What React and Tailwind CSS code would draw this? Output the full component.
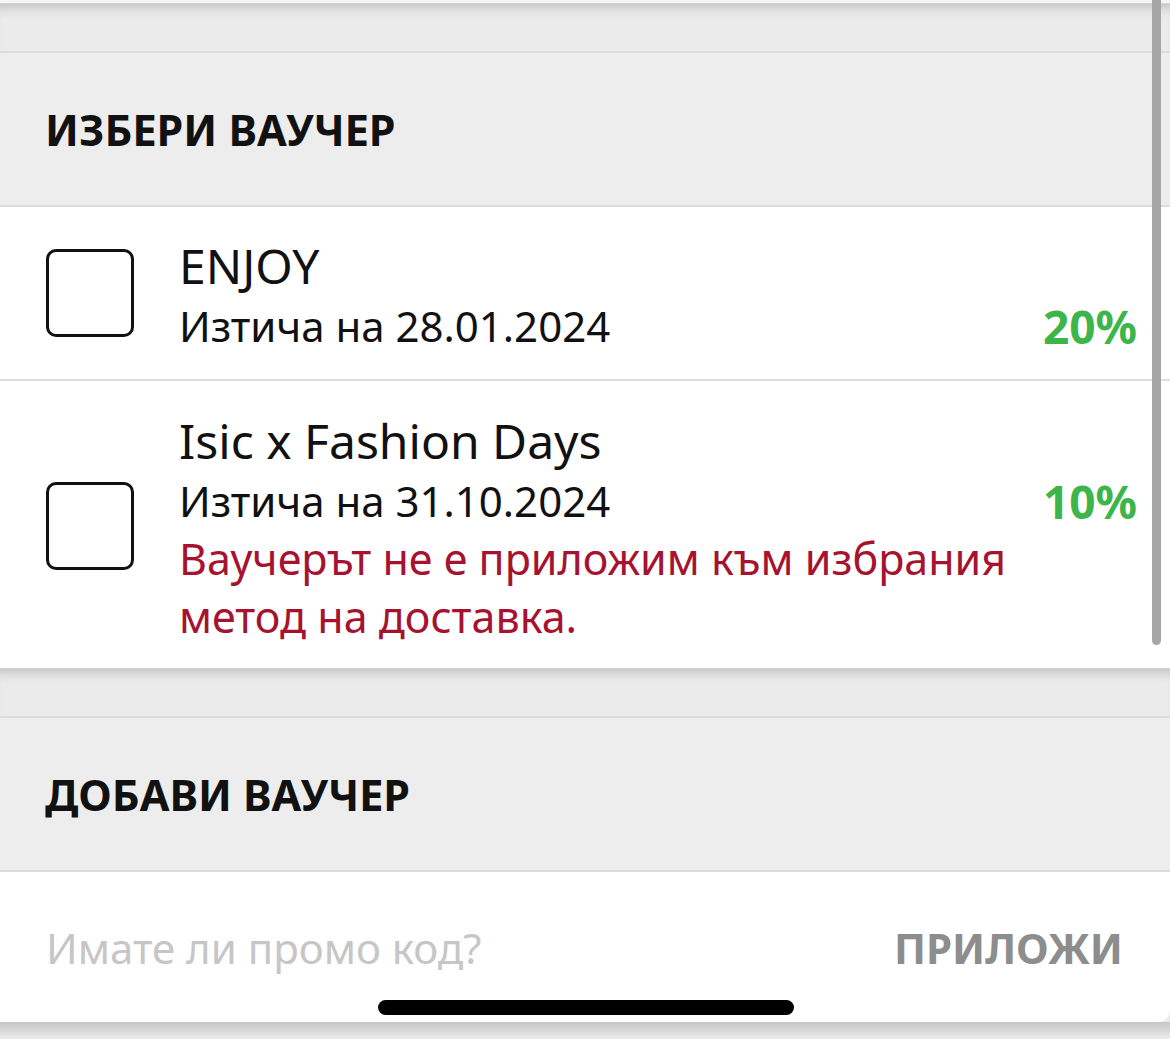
import React from "react";

const vouchers = [
  {
    id: "enjoy",
    title: "ENJOY",
    expires: "Изтича на 28.01.2024",
    discount: "20%",
  },
  {
    id: "isic",
    title: "Isic x Fashion Days",
    expires: "Изтича на 31.10.2024",
    discount: "10%",
    error: "Ваучерът не е приложим към избрания метод на доставка.",
  },
];

function Checkbox() {
  return (
    <div className="w-[88px] h-[88px] shrink-0 mb-[4px] rounded-[10px] border-[3px] border-[#111] bg-white" />
  );
}

function SectionHeader({ children }) {
  return (
    <div className="h-[154px] border-t-2 border-[#dcdcdc] bg-[#ededed] flex items-center px-[45px]">
      <h2 className="text-[43px] font-bold text-[#111] leading-none">{children}</h2>
    </div>
  );
}

function Gap() {
  return (
    <div className="h-[47px] bg-[#ebebeb] shadow-[inset_0_12px_12px_-9px_rgba(0,0,0,0.2)]" />
  );
}

function VoucherRow({ voucher, last }) {
  return (
    <div
      className={`flex items-center pl-[46px] pr-[33px] ${
        last
          ? "pt-[28px] pb-[22px] border-b border-[#d4d4d4]"
          : "pt-[27px] pb-[24px] border-b-2 border-[#dedede]"
      }`}
    >
      <Checkbox />
      <div className="flex-1 ml-[45px] grid grid-cols-[1fr_auto] items-start gap-x-[24px] text-[42px] leading-[58px] text-[#111]">
        <div className="col-span-2 text-[48px] leading-[63px]">{voucher.title}</div>
        <div>{voucher.expires}</div>
        <div className="font-bold text-[46px] leading-[58px] text-[#3db54a] text-right">
          {voucher.discount}
        </div>
        {voucher.error && <div className="text-[43px] text-[#a7122f]">{voucher.error}</div>}
      </div>
    </div>
  );
}

export default function App() {
  return (
    <div
      className="w-[1170px] h-[1039px] relative overflow-hidden bg-[#ebebeb]"
      style={{ fontFamily: '"Noto Sans", "Open Sans", sans-serif' }}
    >
      <div className="h-[3px] bg-[#f5f5f5]" />
      <div className="h-[1px] bg-[#d4d4d4]" />
      <Gap />
      <SectionHeader>ИЗБЕРИ ВАУЧЕР</SectionHeader>

      <div className="bg-white border-t-2 border-[#dcdcdc]">
        {vouchers.map((v, i) => (
          <VoucherRow key={v.id} voucher={v} last={i === vouchers.length - 1} />
        ))}
      </div>

      <Gap />
      <SectionHeader>ДОБАВИ ВАУЧЕР</SectionHeader>

      <div className="h-[152px] bg-white border-t-2 border-[#dcdcdc] rounded-br-[12px] flex items-center justify-between pl-[46px] pr-[47px]">
        <span className="text-[42px] text-[#c6c6c6]">Имате ли промо код?</span>
        <span className="text-[42px] font-bold text-[#8d8d8d]">ПРИЛОЖИ</span>
      </div>
      <div className="h-[17px] bg-gradient-to-b from-[#c6c6c6] to-[#ececec]" />

      {/* scroll indicator */}
      <div className="absolute top-0 left-[1152px] w-[9px] h-[645px] rounded-b-full bg-[#a6a6a6]" />
      {/* home indicator */}
      <div className="absolute top-[1000px] left-[378px] w-[416px] h-[15px] rounded-full bg-black" />
    </div>
  );
}
